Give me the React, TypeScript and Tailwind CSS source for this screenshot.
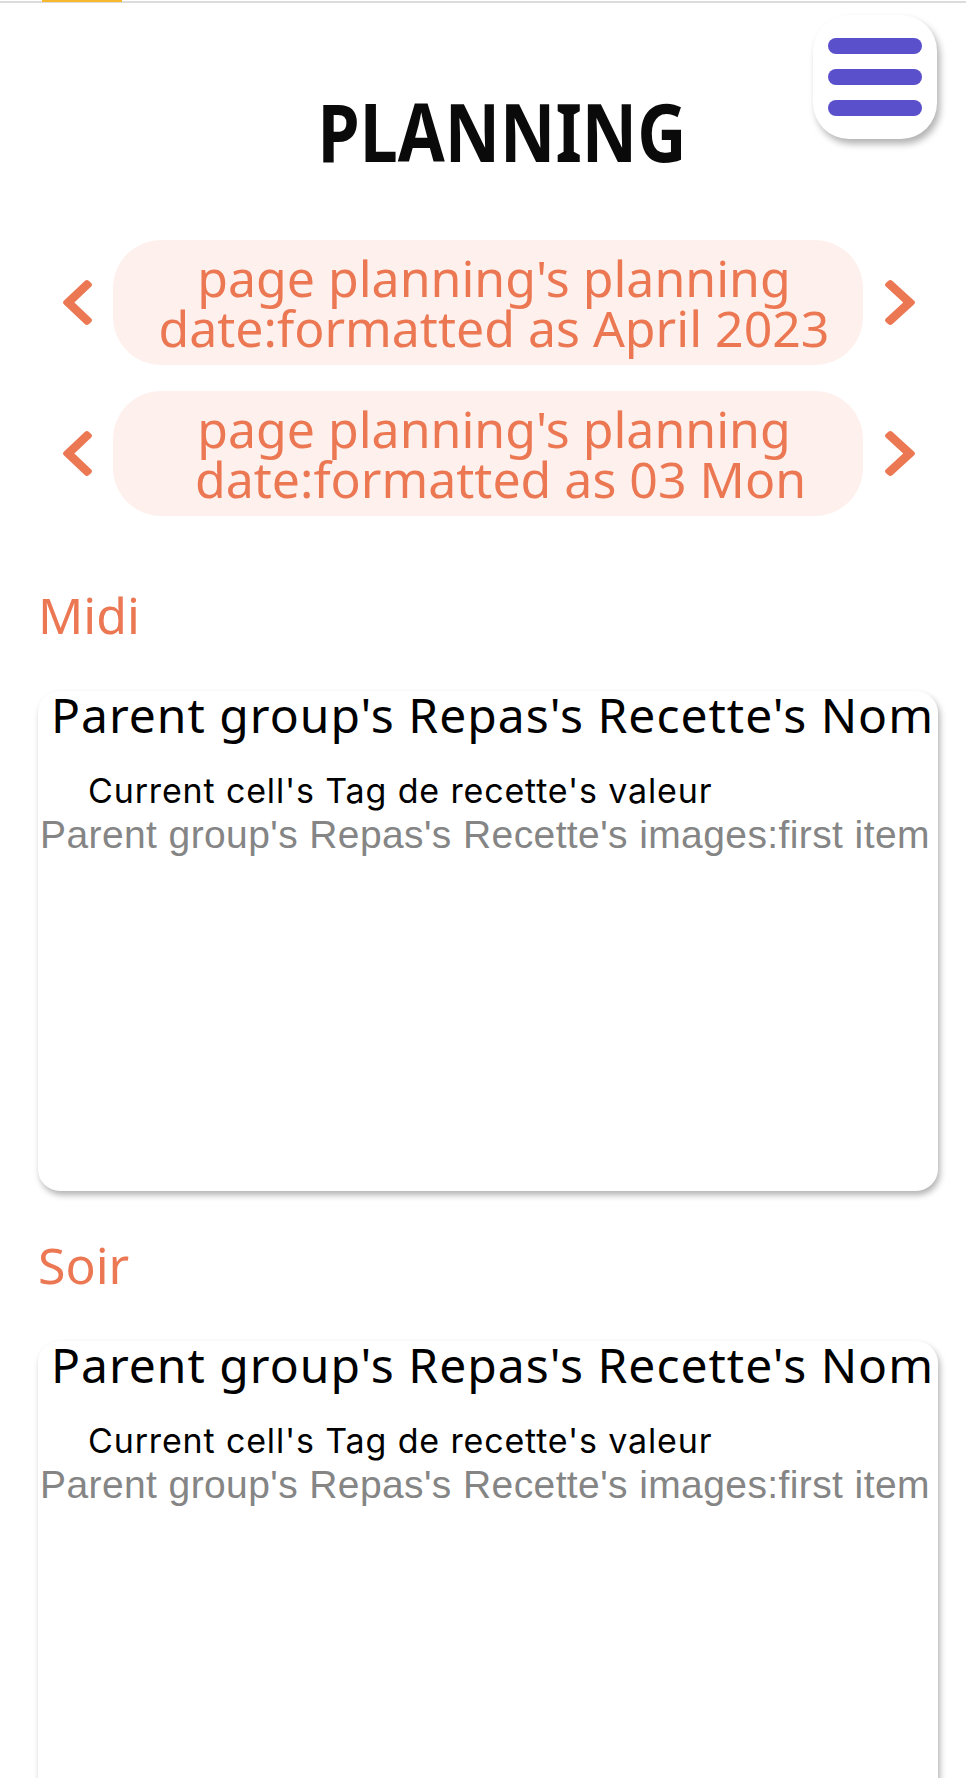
import React from "react";

function ChevronLeft({ className }: { className?: string }) {
  return (
    <svg className={className} viewBox="27 37 266 438" preserveAspectRatio="none" fill="#eb7753">
      <path d="M34.52 239.03L228.87 44.69c9.37-9.37 24.57-9.37 33.94 0l22.67 22.67c9.360 9.36 9.37 24.52.04 33.9L131.49 256l154.02 154.75c9.34 9.38 9.32 24.54-.04 33.9l-22.67 22.67c-9.37 9.37-24.570 9.37-33.94 0L34.52 272.97c-9.37-9.37-9.370-24.57 0-33.94z" />
    </svg>
  );
}

function ChevronRight({ className }: { className?: string }) {
  return (
    <svg className={className} viewBox="27 37 266 438" preserveAspectRatio="none" fill="#eb7753">
      <path d="M285.476 272.971L91.132 467.314c-9.373 9.373-24.569 9.373-33.941 0l-22.667-22.667c-9.357-9.357-9.375-24.522-.04-33.901L188.505 256 34.484 101.255c-9.335-9.379-9.317-24.544.04-33.901l22.667-22.667c9.373-9.373 24.569-9.373 33.941 0L285.475 239.03c9.373 9.372 9.373 24.568.001 33.941z" />
    </svg>
  );
}

function NavRow({ lines, className }: { lines: string[]; className?: string }) {
  return (
    <div className={"flex items-center pl-[63px] " + (className ?? "")}>
      <ChevronLeft className="w-[29px] h-[45px] shrink-0" />
      <div className="ml-[21px] w-[750px] h-[125px] shrink-0 rounded-[48px] bg-[#fef1ed] flex items-center justify-center pl-[12px]">
        <div className="text-center text-[50px] leading-[50px] text-[#eb7753] font-['Noto_Sans',sans-serif]">
          {lines.map((l, i) => (
            <div key={i} className="whitespace-pre">
              {l}
            </div>
          ))}
        </div>
      </div>
      <ChevronRight className="ml-[22px] w-[30px] h-[45px] shrink-0" />
    </div>
  );
}

function MealCard({ className }: { className?: string }) {
  return (
    <div
      className={
        "ml-[38px] w-[900px] h-[500px] shrink-0 rounded-[22px] bg-white shadow-[2px_4px_6px_rgba(0,0,0,0.3)] flex flex-col " +
        (className ?? "")
      }
    >
      <div className="pl-[9px] text-center text-[48px] leading-[48px] tracking-[1px] text-black whitespace-nowrap font-['Noto_Sans',sans-serif]">
        Parent group's Repas's Recette's Nom
      </div>
      <div className="mt-[32px] pl-[50px] text-[34px] leading-[40px] tracking-[0.85px] text-black whitespace-nowrap font-['Inter',sans-serif]">
        Current cell's Tag de recette's valeur
      </div>
      <div className="mt-[4px] pl-[2px] text-[39px] leading-[40px] tracking-[0.4px] text-[#858585] whitespace-nowrap font-['Liberation_Sans',Arial,sans-serif]">
        Parent group's Repas's Recette's images:first item
      </div>
    </div>
  );
}

export default function App() {
  return (
    <div className="relative w-[966px] min-h-screen bg-white font-['Noto_Sans',sans-serif] pb-[40px]">
      {/* top loading bar */}
      <div className="flex flex-col">
        <div className="relative h-[1px]">
          <div className="absolute left-[42px] top-0 w-[80px] h-[1px] bg-[#f5b82e]" />
        </div>
        <div className="h-[2px] bg-[#dcdcdc] relative">
          <div className="absolute left-[42px] top-0 w-[80px] h-[1px] bg-[#f5b82e]" />
        </div>
      </div>

      {/* header */}
      <div className="pt-[88px] flex justify-center pl-[38px]">
        <span className="inline-block text-[80px] leading-[80px] font-bold text-[#0a0a0a] scale-x-[0.85]">
          PLANNING
        </span>
      </div>

      {/* menu button */}
      <button className="absolute left-[813px] top-[15px] w-[124px] h-[124px] rounded-[36px] bg-white shadow-[3px_5px_7px_rgba(0,0,0,0.3)] flex flex-col items-center justify-center gap-[15px]">
        <span className="block w-[94px] h-[16px] rounded-full bg-[#5b50cb]" />
        <span className="block w-[94px] h-[16px] rounded-full bg-[#5b50cb]" />
        <span className="block w-[94px] h-[16px] rounded-full bg-[#5b50cb]" />
      </button>

      <NavRow className="mt-[69px]" lines={["page planning's planning", "date:formatted as April 2023"]} />
      <NavRow className="mt-[26px]" lines={["page planning's planning", " date:formatted as 03 Mon"]} />

      <div className="mt-[65px] pl-[38px] text-[50px] leading-[68px] text-[#eb7753]">Midi</div>
      <MealCard className="mt-[42px]" />

      <div className="mt-[40px] pl-[38px] text-[50px] leading-[68px] text-[#eb7753]">Soir</div>
      <MealCard className="mt-[42px]" />
    </div>
  );
}
